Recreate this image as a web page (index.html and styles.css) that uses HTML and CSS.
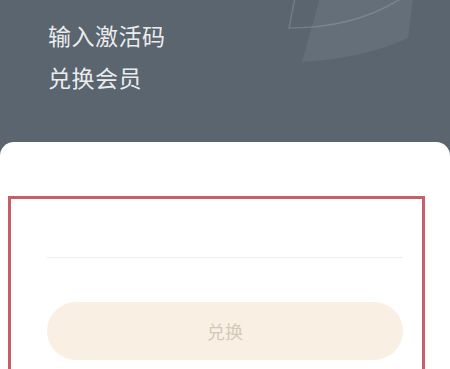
FILE: index.html
```html
<!DOCTYPE html>
<html lang="zh-CN">
<head>
<meta charset="utf-8">
<link rel="stylesheet" href="styles.css">
</head>
<body>
<div class="page">
  <header class="header">
    <svg class="deco" width="450" height="142" viewBox="0 0 450 142" aria-hidden="true">
      <path d="M320,-2 L302,62 Q365,58 408,38 L413,-2 Z" fill="rgba(255,255,255,0.07)"/>
      <path d="M295,-2 L289,28 Q355,28 402,-2" fill="none" stroke="rgba(255,255,255,0.15)" stroke-width="1.5"/>
    </svg>
    <div class="title">输入激活码</div>
    <div class="title">兑换会员</div>
  </header>
  <section class="card">
    <div class="frame">
      <div class="input"></div>
      <button class="btn">兑换</button>
    </div>
  </section>
</div>
</body>
</html>
```

FILE: styles.css
```css
html, body {
  margin: 0;
  padding: 0;
}
body {
  font-family: "Noto Sans CJK SC", "Noto Sans", sans-serif;
  background: #5a6570;
}
.page {
  width: 450px;
  height: 369px;
  overflow: hidden;
  background: #5a6570;
}
.header {
  position: relative;
  height: 142px;
  box-sizing: border-box;
  padding: 14px 0 0 48px;
}
.deco {
  position: absolute;
  left: 0;
  top: 0;
}
.title {
  position: relative;
  font-size: 23px;
  line-height: 42px;
  color: rgba(255, 255, 255, 0.9);
  letter-spacing: 0.5px;
}
.card {
  background: #ffffff;
  border-radius: 14px 14px 0 0;
  height: 260px;
  box-sizing: border-box;
  padding: 54px 0 0 8px;
}
.frame {
  width: 417px;
  box-sizing: border-box;
  border: 3px solid #c65f69;
  padding: 0 19px 30px 36px;
}
.input {
  height: 58px;
  border-bottom: 1px solid #eeeeee;
}
.btn {
  display: flex;
  align-items: center;
  justify-content: center;
  width: 100%;
  height: 58px;
  margin-top: 44px;
  border: none;
  border-radius: 29px;
  background: #f9f0e3;
  color: #d4c9bb;
  font-family: "Noto Sans CJK SC", "Noto Sans", sans-serif;
  font-size: 18px;
  padding: 0;
}
```
